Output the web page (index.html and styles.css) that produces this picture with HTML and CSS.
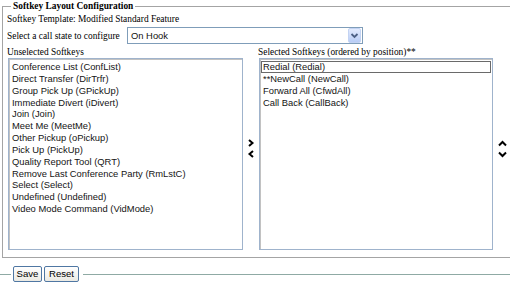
FILE: index.html
```html
<!DOCTYPE html>
<html lang="en">
<head>
<meta charset="utf-8">
<title>Softkey Layout Configuration</title>
<link rel="stylesheet" href="styles.css">
</head>
<body>
<fieldset class="cfg">
  <legend class="cfg-legend">Softkey Layout Configuration</legend>
  <div class="template">Softkey Template: Modified Standard Feature</div>
  <div class="state-row">
    <span class="state-label">Select a call state to configure</span>
    <div class="select">
      <span class="select-value">On Hook</span>
      <span class="select-btn"><svg width="11" height="13" viewBox="0 0 11 13"><polyline points="2.5,5 5.5,8 8.5,5" fill="none" stroke="#4d6185" stroke-width="1.8"/></svg></span>
    </div>
  </div>
  <div class="lists">
    <div class="col-label left-label">Unselected Softkeys</div>
    <div class="listbox left-list">
      <div class="item">Conference List (ConfList)</div>
      <div class="item">Direct Transfer (DirTrfr)</div>
      <div class="item">Group Pick Up (GPickUp)</div>
      <div class="item">Immediate Divert (iDivert)</div>
      <div class="item">Join (Join)</div>
      <div class="item">Meet Me (MeetMe)</div>
      <div class="item">Other Pickup (oPickup)</div>
      <div class="item">Pick Up (PickUp)</div>
      <div class="item">Quality Report Tool (QRT)</div>
      <div class="item">Remove Last Conference Party (RmLstC)</div>
      <div class="item">Select (Select)</div>
      <div class="item">Undefined (Undefined)</div>
      <div class="item">Video Mode Command (VidMode)</div>
    </div>
    <div class="arrows move-arrows">
      <svg width="8" height="8" viewBox="0 0 8 8"><polyline points="2,1 5.5,4 2,7" fill="none" stroke="#000" stroke-width="2"/></svg>
      <svg width="8" height="8" viewBox="0 0 8 8"><polyline points="6,1 2.5,4 6,7" fill="none" stroke="#000" stroke-width="2"/></svg>
    </div>
    <div class="col-label right-label">Selected Softkeys (ordered by position)**</div>
    <div class="listbox right-list">
      <div class="item focused">Redial (Redial)</div>
      <div class="item">**NewCall (NewCall)</div>
      <div class="item">Forward All (CfwdAll)</div>
      <div class="item">Call Back (CallBack)</div>
    </div>
    <div class="arrows order-arrows">
      <svg width="9" height="7" viewBox="0 0 9 7"><polyline points="1,5.5 4.5,2 8,5.5" fill="none" stroke="#000" stroke-width="2"/></svg>
      <svg width="9" height="7" viewBox="0 0 9 7"><polyline points="1,1.5 4.5,5 8,1.5" fill="none" stroke="#000" stroke-width="2"/></svg>
    </div>
  </div>
</fieldset>
<fieldset class="actions">
  <legend class="actions-legend">
    <button class="btn btn-save" type="button">Save</button>
    <button class="btn btn-reset" type="button">Reset</button>
  </legend>
</fieldset>
</body>
</html>
```
FILE: styles.css
```css
html, body {
  margin: 0;
  padding: 0;
  background: #ffffff;
  overflow: hidden;
}
body {
  font-family: "Liberation Serif", "Times New Roman", serif;
  font-size: 9.4px;
  color: #000;
}
.cfg {
  margin: 0 0 0 2px;
  border: 1px solid #a4a4a4;
  border-right: 0;
  padding: 1px 0 7px 4px;
  min-width: 0;
}
.cfg-legend {
  margin-left: 4px;
  padding: 0 2px;
  font-weight: bold;
  font-size: 9.4px;
  line-height: 12px;
}
.template {
  line-height: 12px;
}
.state-row {
  display: flex;
  align-items: center;
  margin-top: 2px;
  height: 17px;
}
.state-label {
  width: 119px;
  flex: none;
  line-height: 12px;
}
.select {
  box-sizing: border-box;
  width: 236px;
  height: 17px;
  margin-left: 1px;
  border: 1px solid #7f9db9;
  background: #fff;
  display: flex;
  align-items: center;
}
.select-value {
  font-family: "Liberation Sans", Arial, sans-serif;
  font-size: 9.4px;
  color: #111;
  padding-left: 3px;
}
.select-btn {
  margin-left: auto;
  margin-right: 1px;
  box-sizing: border-box;
  width: 13px;
  height: 15px;
  border: 1px solid #c3d3f3;
  border-radius: 2px;
  background: linear-gradient(#e3ebfd, #b9cdf6);
  display: flex;
  align-items: center;
  justify-content: center;
}
.lists {
  margin-top: 2px;
  display: grid;
  grid-template-columns: 236px 16px 234px 17px;
  grid-template-rows: 12px 192px;
}
.col-label {
  line-height: 12px;
  white-space: nowrap;
}
.left-label { grid-column: 1; grid-row: 1; }
.right-label { grid-column: 3; grid-row: 1; margin-left: -1px; }
.listbox {
  box-sizing: border-box;
  border: 1px solid #9fb3cc;
  box-shadow: inset 1px 1px 0 #c2c2c2;
  background: #fff;
  padding: 2px 1px 0 1px;
  font-family: "Liberation Sans", Arial, sans-serif;
  font-size: 9.4px;
  line-height: 11.85px;
  color: #141414;
  grid-row: 2;
}
.left-list { grid-column: 1; margin-left: 1px; }
.right-list { grid-column: 3; }
.item {
  padding-left: 2px;
  white-space: nowrap;
}
.focused {
  outline: 1px solid #6a6a6a;
  outline-offset: -1px;
}
.arrows {
  grid-row: 1 / 3;
  display: flex;
  flex-direction: column;
  justify-content: center;
  align-items: center;
}
.move-arrows {
  grid-column: 2;
  gap: 3px;
  padding-top: 1px;
}
.order-arrows {
  grid-column: 4;
  gap: 4px;
  padding-top: 2px;
  padding-left: 2px;
}
.actions {
  margin: 8px 0 0 0;
  border: 0;
  border-top: 1px solid #8faaa4;
  padding: 0;
  min-width: 0;
}
.actions-legend {
  margin-left: 11px;
  padding: 0 4px 0 2px;
  display: flex;
  gap: 2px;
}
.btn {
  box-sizing: border-box;
  height: 16px;
  padding: 0;
  margin: 0;
  border: 1px solid #4f77a3;
  border-radius: 2px;
  background: linear-gradient(#ffffff, #ebeae3);
  font-family: "Liberation Sans", Arial, sans-serif;
  font-size: 9.6px;
  color: #000;
  line-height: 14px;
}
.btn-save { width: 29px; }
.btn-reset { width: 35px; }
```
